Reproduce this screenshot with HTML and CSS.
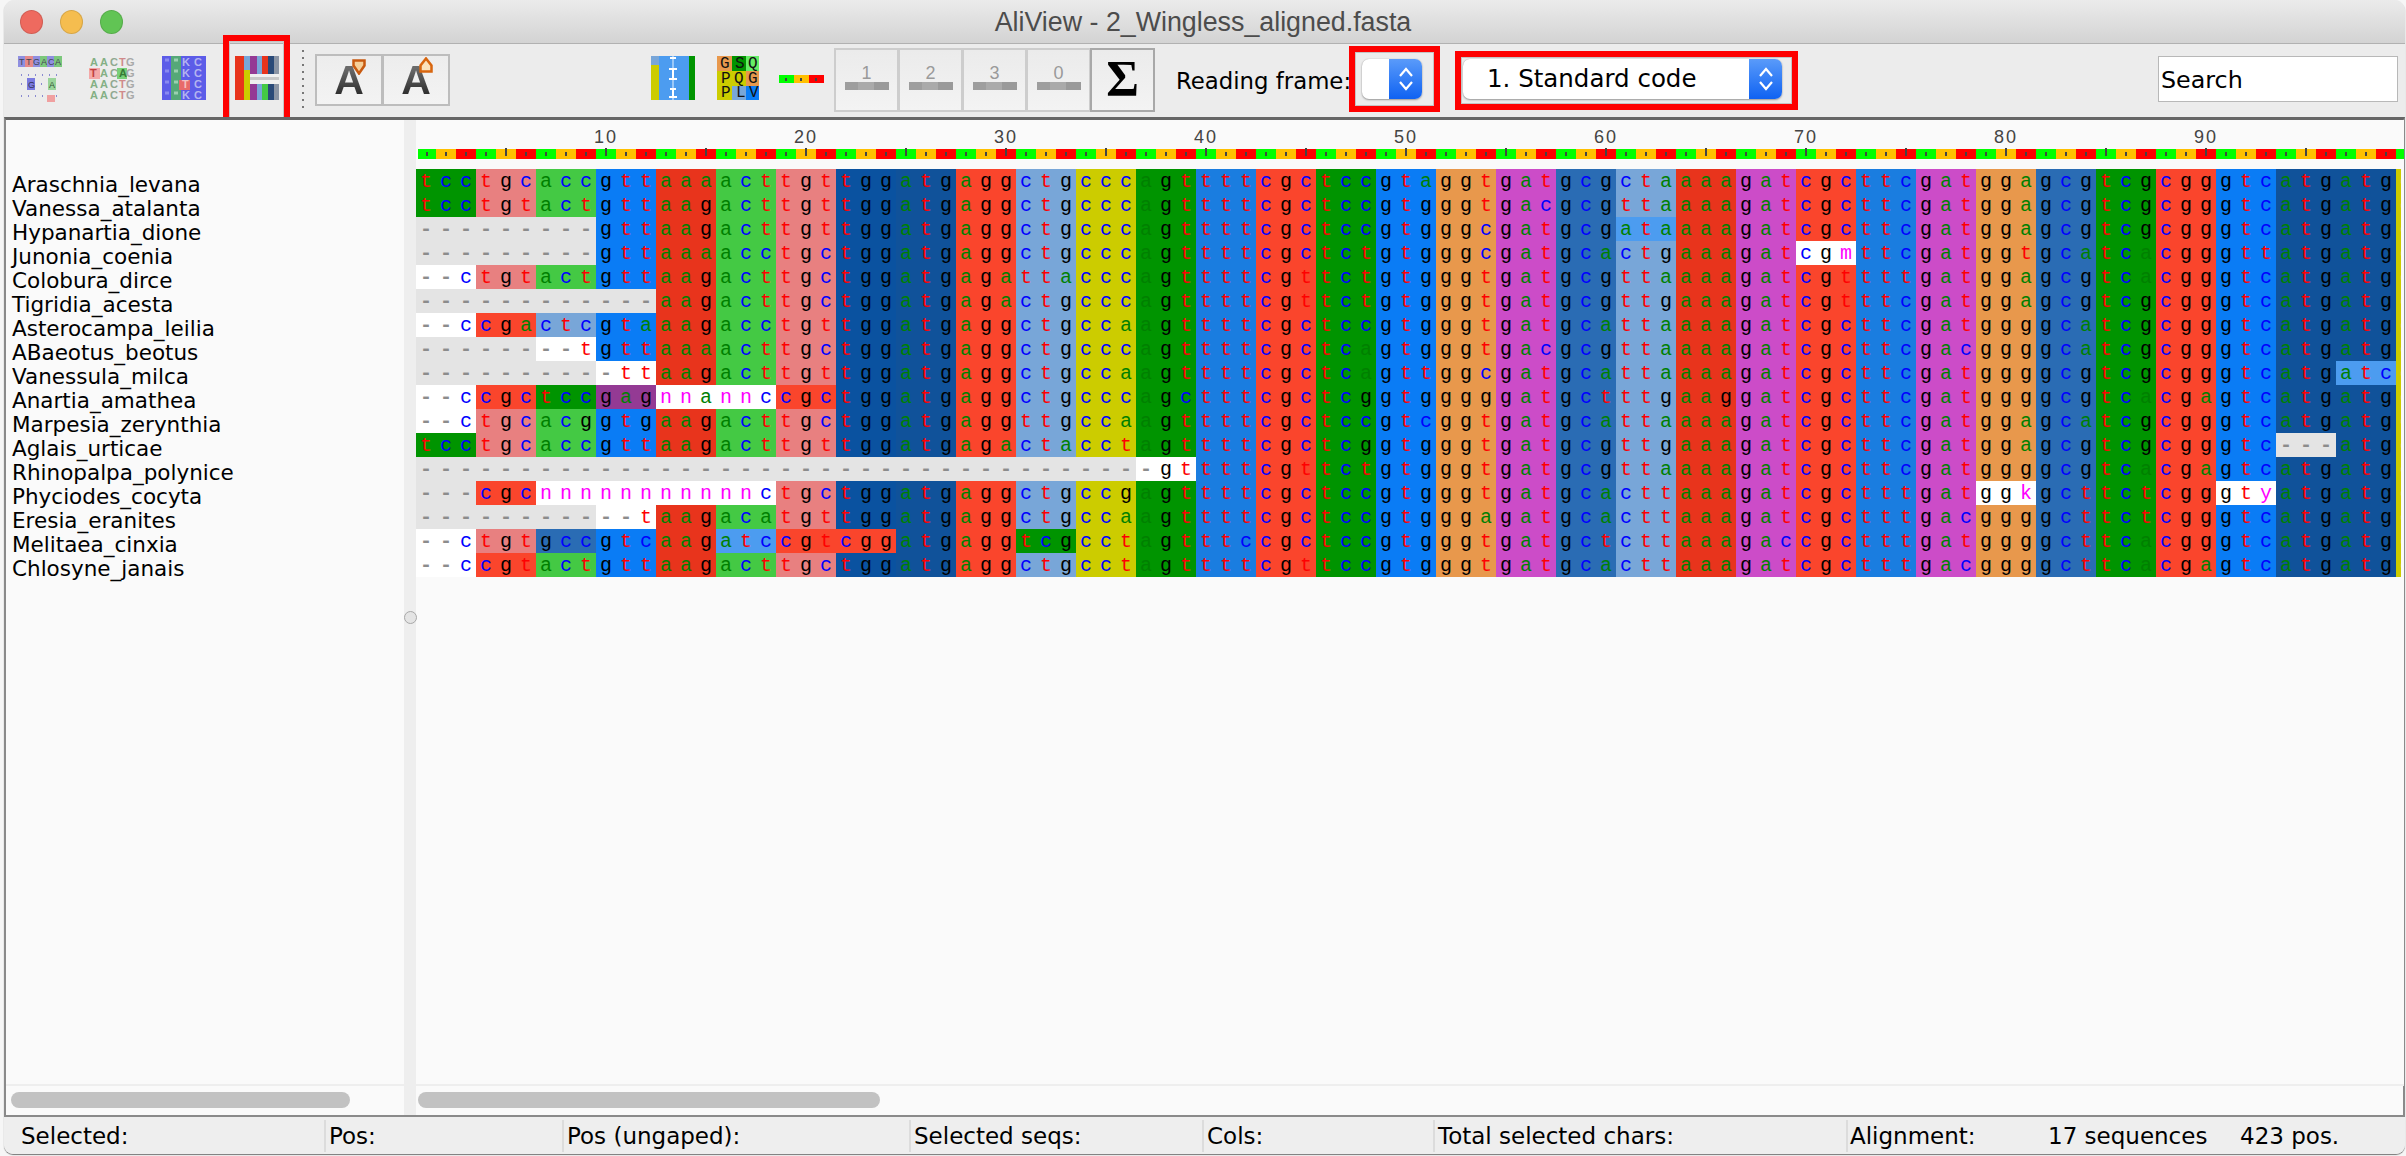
FILE: index.html
```html
<!DOCTYPE html>
<html lang="en">
<head>
<meta charset="utf-8">
<title>AliView - 2_Wingless_aligned.fasta</title>
<link rel="stylesheet" href="styles.css">
</head>
<body>
<div class="window">
  <header class="titlebar">
    <div class="lights"><i class="light red"></i><i class="light yellow"></i><i class="light green"></i></div>
    <div class="title">AliView - 2_Wingless_aligned.fasta</div>
  </header>
  <div class="toolbar">
    <svg class="icon i1" width="44" height="46" viewBox="0 0 44 46">
      <rect width="44" height="11" fill="#8f8fe0"/><rect x="7" width="8" height="11" fill="#e58a8a"/><rect x="22" width="7" height="11" fill="#7cc87c"/><rect x="36" width="8" height="11" fill="#7cc87c"/>
      <text class="itext-s" y="9" fill="#445"><tspan x="1">T</tspan><tspan x="8">T</tspan><tspan x="15">G</tspan><tspan x="23">A</tspan><tspan x="30">C</tspan><tspan x="37">A</tspan></text>
      <path d="M3 19h1M10 19h1M17 19h1M24 19h1M31 19h1M38 19h1M3 40h1M10 40h1M17 40h1M24 40h1M31 40h1M38 40h1" stroke="#8a8ad0" stroke-width="2"/>
      <rect x="9" y="22" width="8" height="12" fill="#7a7ae0"/><rect x="30" y="22" width="8" height="12" fill="#9ad49a"/>
      <text class="itext-s" x="10" y="32" fill="#335">G</text><text class="itext-s" x="31" y="32" fill="#353">A</text>
      <path d="M3 28h1M23 28h1" stroke="#8a8ad0" stroke-width="2"/>
      <rect x="29" y="39" width="8" height="7" fill="#f0a0a0"/>
    </svg>
    <svg class="icon i2" width="46" height="44" viewBox="0 0 46 44">
      <rect x="0" y="12" width="11" height="11" fill="#f4a8a8"/><rect x="28" y="12" width="10" height="11" fill="#78d078"/>
      <g class="itext-m">
        <text y="10"><tspan x="1" fill="#84b084">A</tspan><tspan x="11" fill="#84b084">A</tspan><tspan x="21" fill="#90a890">C</tspan><tspan x="30" fill="#d08a8a">T</tspan><tspan x="37" fill="#a8a8a8">G</tspan></text>
        <text y="21"><tspan x="1" fill="#c04040">T</tspan><tspan x="11" fill="#84b084">A</tspan><tspan x="21" fill="#90a890">C</tspan><tspan x="30" fill="#357a35">A</tspan><tspan x="37" fill="#a8a8a8">G</tspan></text>
        <text y="32"><tspan x="1" fill="#84b084">A</tspan><tspan x="11" fill="#84b084">A</tspan><tspan x="21" fill="#90a890">C</tspan><tspan x="30" fill="#d08a8a">T</tspan><tspan x="37" fill="#a8a8a8">G</tspan></text>
        <text y="43"><tspan x="1" fill="#84b084">A</tspan><tspan x="11" fill="#84b084">A</tspan><tspan x="21" fill="#90a890">C</tspan><tspan x="30" fill="#d08a8a">T</tspan><tspan x="37" fill="#a8a8a8">G</tspan></text>
      </g>
    </svg>
    <svg class="icon i3" width="44" height="44" viewBox="0 0 44 44">
      <rect width="44" height="44" fill="#5c5ce8"/><rect x="9" width="10" height="44" fill="#55a878"/><rect x="17" y="24" width="11" height="10" fill="#e86a6a"/>
      <g class="itext-m" fill="#b4b4f0">
        <text y="10"><tspan x="20">K</tspan><tspan x="32">C</tspan></text>
        <text y="21"><tspan x="20">K</tspan><tspan x="32">C</tspan></text>
        <text y="32"><tspan x="20" fill="#f4c0c0">T</tspan><tspan x="32">C</tspan></text>
        <text y="43"><tspan x="20">K</tspan><tspan x="32">C</tspan></text>
      </g>
      <path d="M3 4h4M3 15h4M3 26h4M3 37h4" stroke="#8a8af0" stroke-width="3"/>
      <path d="M12 4h4M12 15h4M12 26h4M12 37h4" stroke="#9ad0b0" stroke-width="3"/>
    </svg>
    <svg class="icon i4" width="44" height="44" viewBox="0 0 44 44">
      <rect width="9" height="44" fill="#e8341c"/><rect x="9" width="6" height="44" fill="#cccc00"/><rect x="9" width="6" height="14" fill="#78a6d8"/>
      <rect x="15" width="7" height="44" fill="#943a94"/><rect x="22" width="5" height="44" fill="#78a6d8"/><rect x="27" width="6" height="44" fill="#e8341c"/><rect x="27" y="28" width="6" height="16" fill="#44c944"/>
      <rect x="33" width="6" height="44" fill="#2a4a78"/><rect x="39" width="5" height="44" fill="#8a94a4"/>
      <rect x="15" y="18" width="29" height="10" fill="#f0f0f0"/><rect x="15" y="21" width="29" height="3" fill="#c8c8c8"/>
    </svg>
    <div class="sep"></div>
    <div class="abtn-group">
      <div class="abtn"><span class="aglyph">A</span><svg class="badge" width="14" height="16" viewBox="0 0 14 16"><path d="M1.500 1.500h11v5l-5.500 8-5.500-8z" fill="#f5d09a" stroke="#c85a10" stroke-width="2.500"/></svg></div>
      <div class="abtn"><span class="aglyph">A</span><svg class="badge up" width="14" height="16" viewBox="0 0 14 16"><path d="M1.500 14.500h11v-6l-5.500-7-5.500 7z" fill="#fbe2bc" stroke="#d8660f" stroke-width="2.500"/></svg></div>
    </div>
    <svg class="icon i5" width="44" height="44" viewBox="0 0 44 44">
      <rect width="8" height="44" fill="#cccc00"/><rect width="8" height="9" fill="#78a6d8"/><rect x="8" width="30" height="44" fill="#4c9cf0"/><rect x="38" width="6" height="44" fill="#009400"/>
      <path d="M22 0v44" stroke="#9ac8f8" stroke-width="2"/>
      <path d="M19 2h6M18 13h8M18 23h8M19 33h6M18 41h8" stroke="#fff" stroke-width="2"/>
      <path d="M22 13v10M22 33v8" stroke="#fff" stroke-width="2"/>
    </svg>
    <svg class="icon i6" width="42" height="44" viewBox="0 0 42 44">
      <rect width="15" height="15" fill="#e8984c"/><rect x="15" width="14" height="15" fill="#009400"/><rect x="29" width="13" height="15" fill="#66ee66"/>
      <rect y="15" width="29" height="15" fill="#cccc00"/><rect x="29" y="15" width="13" height="15" fill="#e8984c"/>
      <rect y="30" width="15" height="14" fill="#cccc00"/><rect x="15" y="30" width="14" height="14" fill="#78a6d8"/><rect x="29" y="30" width="13" height="14" fill="#0a7cf5"/>
      <g class="i6text">
        <text x="3" y="12">G</text><text x="18" y="12">S</text><text x="31" y="12">Q</text>
        <text x="4" y="27">P</text><text x="17" y="27">Q</text><text x="31" y="27">G</text>
        <text x="4" y="41">P</text><text x="19" y="41">L</text><text x="32" y="41">V</text>
      </g>
    </svg>
    <svg class="icon i7" width="45" height="8" viewBox="0 0 45 8">
      <rect width="15" height="8" fill="#0f0"/><rect x="15" width="15" height="8" fill="#ffc000"/><rect x="30" width="15" height="8" fill="#f00"/>
      <path d="M7 3v3M22 3v3M37 3v3" stroke="#444" stroke-width="2"/>
    </svg>
    <div class="frames">
      <div class="fbtn"><span class="fnum">1</span><span class="fbar"></span></div>
      <div class="fbtn"><span class="fnum">2</span><span class="fbar"></span></div>
      <div class="fbtn"><span class="fnum">3</span><span class="fbar"></span></div>
      <div class="fbtn"><span class="fnum">0</span><span class="fbar"></span></div>
      <div class="fbtn sigma">Σ</div>
    </div>
    <div class="rf-label">Reading frame:</div>
    <div class="select frame-select">
      <span class="select-text"></span>
      <span class="stepper"><svg width="20" height="30" viewBox="0 0 20 30"><path d="M4 12l6-7 6 7M4 18l6 7 6-7" fill="none" stroke="#fff" stroke-width="2.200"/></svg></span>
    </div>
    <div class="select code-select">
      <span class="select-text">1. Standard code</span>
      <span class="stepper"><svg width="20" height="30" viewBox="0 0 20 30"><path d="M4 12l6-7 6 7M4 18l6 7 6-7" fill="none" stroke="#fff" stroke-width="2.200"/></svg></span>
    </div>
    <div class="search">Search</div>
    <div class="hl hl-a"></div>
    <div class="hl hl-b"></div>
    <div class="hl hl-c"></div>
  </div>
  <main class="main">
    <section class="names-pane">
      <div class="names">
        <div>Araschnia_levana</div><div>Vanessa_atalanta</div><div>Hypanartia_dione</div><div>Junonia_coenia</div>
        <div>Colobura_dirce</div><div>Tigridia_acesta</div><div>Asterocampa_leilia</div><div>ABaeotus_beotus</div>
        <div>Vanessula_milca</div><div>Anartia_amathea</div><div>Marpesia_zerynthia</div><div>Aglais_urticae</div>
        <div>Rhinopalpa_polynice</div><div>Phyciodes_cocyta</div><div>Eresia_eranites</div><div>Melitaea_cinxia</div><div>Chlosyne_janais</div>
      </div>
    </section>
    <div class="divider"><i class="knob"></i></div>
    <section class="align-pane">
      <div class="ruler-nums">
        <span>10</span><span>20</span><span>30</span><span>40</span><span>50</span><span>60</span><span>70</span><span>80</span><span>90</span>
      </div>
      <div class="ruler-bar" id="bar"></div>
      <div class="seqs" id="seqs"></div>
    </section>
    <div class="scroll-l"><i class="thumb thumb-l"></i></div>
    <div class="divider-b"></div>
    <div class="scroll-r"><i class="thumb thumb-r"></i></div>
  </main>
  <footer class="status">
    <div class="cell c1">Selected:</div>
    <div class="cell c2">Pos:</div>
    <div class="cell c3">Pos (ungaped):</div>
    <div class="cell c4">Selected seqs:</div>
    <div class="cell c5">Cols:</div>
    <div class="cell c6">Total selected chars:</div>
    <div class="cell c7"><span class="s1">Alignment:</span><span class="s2">17 sequences</span><span>423 pos.</span></div>
  </footer>
</div>
<script src="script.js"></script>
</body>
</html>
```
FILE: styles.css
```css
* { box-sizing: border-box; }
html, body { margin: 0; height: 100%; overflow: hidden; }
body { background: #f6f6f6; font-family: "DejaVu Sans", sans-serif; color: #000; }
.window {
  margin-left: 4px; width: 2401px; height: 1154px; display: flex; flex-direction: column;
  background: #ececec; border-radius: 11px 11px 9px 9px; overflow: hidden;
  box-shadow: 0 1px 1px #777;
}
.titlebar {
  height: 44px; flex: none; display: flex; align-items: center; position: relative;
  background: linear-gradient(#ebebeb, #d3d3d3); border-bottom: 1px solid #b1b1b1;
}
.lights { display: flex; gap: 17px; margin-left: 16px; }
.light { width: 23px; height: 24px; border-radius: 50%; border: 1px solid rgba(0,0,0,.12); }
.red { background: #ee6a5f; } .yellow { background: #f5bd4f; } .green { background: #61c454; }
.title {
  position: absolute; left: 0; right: 0; top: 6px; text-align: center; padding-right: 3px;
  font: 26.800px/32px "Liberation Sans", sans-serif; color: #4c4c4c;
}
.toolbar { height: 73px; flex: none; display: flex; align-items: center; position: relative; padding-left: 14px; background: #ececec; }
.icon { flex: none; overflow: visible; }
.itext-s { font: 9px "Liberation Sans", sans-serif; }
.itext-m { font: bold 11px "Liberation Sans", sans-serif; }
.i1 { margin: -3px 0 0 0; }
.i2 { margin: -6px 0 0 27px; }
.i3 { margin: -6px 0 0 27px; }
.i4 { margin: -6px 0 0 29px; }
.sep { width: 2px; height: 62px; margin-left: 23px; background: repeating-linear-gradient(#777 0 2px, transparent 2px 7px); }
.abtn-group { display: flex; margin-left: 11px; margin-top: -2px; }
.abtn {
  width: 68px; height: 52px; border: 2px solid #bdbdbd; margin-right: -1px; position: relative; text-align: center;
  font: bold 41px/48px "Liberation Sans", sans-serif; background: linear-gradient(#ededed, #f3f3f3);
}
.aglyph { color: transparent; background: linear-gradient(#6a6a6a 25%, #2a2a2a 85%); -webkit-background-clip: text; background-clip: text; }
.badge { position: absolute; left: 35px; top: 3px; }
.badge.up { left: 35px; top: 1px; }
.i5 { margin: -6px 0 0 202px; }
.i6 { margin: -6px 0 0 22px; }
.i6text { font: 16px "Liberation Mono", monospace; fill: #111; }
.i7 { margin: -4px 0 0 20px; }
.frames { display: flex; margin-left: 10px; margin-top: -1px; }
.fbtn {
  width: 65px; height: 64px; border: 2px solid #cdcdcd; margin-right: -1px; display: flex; flex-direction: column; align-items: center;
  background: linear-gradient(#ebebeb, #f3f3f3);
}
.fnum { font: 18px/20px "Liberation Sans", sans-serif; color: #9a9a9a; margin-top: 13px; }
.fbar { width: 44px; height: 8px; margin-top: -1px; background: linear-gradient(90deg, #9e9e9e 0 30%, #aaaaaa 30% 65%, #9a9a9a 65%); }
.sigma { border-color: #a8a8a8; font: bold 50px/56px "Liberation Serif", serif; color: #000; width: 65px; margin-right: 0; }
.rf-label { margin-left: 21px; margin-top: 1px; font-size: 22.800px; white-space: nowrap; width: 186px; }
.select {
  height: 40px; background: #fff; border-radius: 7px; display: flex; justify-content: space-between; flex: none; margin-top: -4px;
  box-shadow: 0 1px 2px #999, 0 0 1px #aaa; overflow: hidden;
}
.frame-select { width: 60px; }
.code-select { width: 319px; margin-left: 41px; }
.select-text { font-size: 24.500px; line-height: 40px; padding-left: 24px; white-space: nowrap; }
.stepper { width: 33px; background: linear-gradient(#5a9bfa, #0f62f2); display: flex; align-items: center; justify-content: center; }
.search {
  width: 240px; height: 46px; margin-left: 376px; margin-top: -3px; background: #fff; border: 1px solid #b8b8b8; flex: none;
  font-size: 23.800px; line-height: 46px; padding-left: 2px;
}
.hl { position: absolute; border: 6px solid #fe0000; box-shadow: inset 0 0 0 1px #c4c4c4; }
.hl-a { left: 219px; top: -9px; width: 67px; height: 91px; border-bottom-width: 8px; }
.hl-b { left: 1345px; top: 2px; width: 91px; height: 66px; }
.hl-c { left: 1451px; top: 7px; width: 343px; height: 59px; }

.main {
  flex: 1; display: grid; grid-template-columns: 398px 12px 1988px; grid-template-rows: 964px 31px;
  border: 2px solid #8a8a8a; border-top: 3px solid #666; border-bottom-width: 2px; background: #fafafa; position: relative;
}
.names-pane { background: #fafafa; padding-top: 53px; }
.names { padding-left: 6px; font-size: 21.500px; line-height: 24px; white-space: nowrap; }
.divider { background: #eee; position: relative; }
.knob { position: absolute; left: 0; top: 491px; width: 13px; height: 13px; border-radius: 50%; background: #e4e4e4; border: 1px solid #a8a8a8; }
.align-pane { background: #fafafa; overflow: hidden; }
.ruler-nums { height: 29px; padding: 5px 0 0 90px; display: flex; }
.ruler-nums span { width: 200px; flex: none; text-align: center; font: 18px/24px "Liberation Sans", sans-serif; letter-spacing: 2px; color: #444; }
.ruler-bar { height: 10px; margin-left: 2px; display: flex; width: 1984px; }
.tick { width: 20px; flex: none; position: relative; }
.tick:first-child { width: 18px; }
.tick::after { content: ""; position: absolute; left: 50%; margin-left: -1px; top: 3px; width: 2px; height: 4px; background: #444; }
.tick.tall::after { top: -1px; height: 8px; }
.bar0 { background: #0f0; } .bar1 { background: #ffc000; } .bar2 { background: #f00; }
.seqs { margin-top: 10px; width: 1985px; overflow: hidden; font: 20px/26px "Liberation Mono", monospace; }
.seq { display: flex; height: 24px; background: #fff; }
.codon { flex: none; width: 60px; display: flex; }
.codon.partial { width: 5px; overflow: hidden; }
.codon span { width: 20px; text-align: center; flex: none; }
.b-t { color: #f00; } .b-c { color: #00f; } .b-a { color: #008000; } .b-g { color: #000; } .b-x { color: #f0f; } .b-gap { color: #8c8c8c; font-weight: bold; }
.aa-none { background: #fff; } .aa-gap { background: #e4e4e4; }
.aa-A { background: #2a6cb4; } .aa-C { background: #e88080; } .aa-D { background: #cc4cc8; } .aa-E { background: #943a94; }
.aa-F { background: #1a7de0; } .aa-G { background: #e8984c; } .aa-I { background: #4c9cf0; } .aa-K { background: #e8341c; }
.aa-L { background: #78a6d8; } .aa-M { background: #10529a; } .aa-P { background: #cccc00; } .aa-R { background: #fa452c; }
.aa-S { background: #009400; } .aa-T { background: #44c944; } .aa-V { background: #0a7cf5; } .aa-W { background: #0a52a0; }
.aa-H, .aa-Y { background: #15a4a4; } .aa-N, .aa-Q { background: #44c944; }
.scroll-l, .scroll-r { border-top: 2px solid #eeeeee; padding-top: 6px; }
.divider-b { background: #eee; }
.thumb { display: block; height: 16px; border-radius: 8px; background: #c2c2c2; }
.thumb-l { margin-left: 5px; width: 339px; }
.thumb-r { margin-left: 2px; width: 462px; }
.status { height: 38px; flex: none; display: flex; background: #eee; padding-top: 1px; }
.cell { height: 32px; margin-top: 2px; font-size: 23px; line-height: 32px; white-space: nowrap; border-right: 2px solid #dcdcdc; padding-left: 3px; flex: none; }
.c1 { width: 322px; padding-left: 17px; } .c2 { width: 238px; } .c3 { width: 347px; } .c4 { width: 293px; } .c5 { width: 231px; } .c6 { width: 413px; }
.c7 { border-right: 0; padding-left: 2px; }
.s1 { display: inline-block; width: 198px; } .s2 { display: inline-block; width: 192px; }
```
FILE: script.js
```js
const DATA = [
"tcc tgc acc gtt aaa act tgt tgg atg agg ctg ccc agt ttt cgc tcc gta ggt gat gcg cta aaa gat cgc ttc gat gga gcg tcg cgg gtc atg atg c",
"tcc tgt act gtt aag act tgt tgg atg agg ctg ccc agt ttt cgc tcc gtg ggt gac gcg tta aaa gat cgc ttc gat gga gcg tcg cgg gtc atg atg c",
"--- --- --- gtt aag act tgt tgg atg agg ctg ccc agt ttt cgc tcc gtg ggc gat gcg ata aaa gat cgc ttc gat gga gcg tcg cgg gtc atg atg c",
"--- --- --- gtt aaa acc tgc tgg atg agg ctg ccc agt ttt cgc tct gtg ggc gat gca ctg aaa gat cgm ttc gat ggt gca tca cgg gtt atg atg c",
"--c tgt act gtt aag act tgc tgg atg aga tta ccc agt ttt cgt tct gtg ggt gat gcg tta aaa gat cgt ttt gat gga gcg tca cgg gtc atg atg c",
"--- --- --- --- aag act tgc tgg atg aga ctg ccc agt ttt cgt tct gtg ggt gat gcg ttg aaa gat cgt ttc gat gga gcg tcg cgg gtc atg atg c",
"--c cga ctc gta aag acc tgt tgg atg agg ctg cca agt ttt cgc tcc gtg ggt gat gca tta aaa gat cgc ttc gat ggg gca tcg cgg gtc atg atg c",
"--- --- --t gtt aaa act tgc tgg atg agg ctg ccc agt ttt cgc tca gtg ggt gac gcg tta aaa gat cgc ttc gac ggg gca tcg cgg gtc atg atg c",
"--- --- --- -tt aag act tgt tgg atg agg ctg cca agt ttt cgc tca gtt ggc gat gca tta aaa gat cgc ttc gat ggg gcg tcg cgg gtc atg atc c",
"--c cgc tcc gag nna nnc cgc tgg atg agg ctg ccc agc ttt cgc tcg gtg ggg gat gct ttg aag gat cgc ttc gat ggg gcg tca cga gtc atg atg c",
"--c tgc acg gtg aag act tgc tgg atg agg ttg cca agt ttt cgc tcc gtc ggt gat gca tta aaa gat cgc ttc gat gga gca tcg cgg gtc atg atg c",
"tcc tgc acc gtt aag act tgt tgg atg aga cta cct agt ttt cgc tcg gtg ggt gat gcg ttg aaa gat cgc ttc gat gga gcg tcg cgg gtc --- atg c",
"--- --- --- --- --- --- --- --- --- --- --- --- -gt ttt cgt tct gtg ggt gat gcg tta aaa gat cgc ttc gat ggg gcg tca cga gtc atg atg c",
"--- cgc nnn nnn nnn nnc tgc tgg atg agg ctg ccg agt ttt cgc tcc gtg ggt gat gca ctt aaa gat cgc ttt gat ggk gct tct cgg gty atg atg c",
"--- --- --- --t aag aca tgt tgg atg agg ctg cca agt ttt cgc tcc gtg gga gat gca ctt aaa gat cgc ttt gac ggg gct tct cgg gtc atg atg c",
"--c tgt gcc gtc aag atc cgt cgg atg agg tcg cct agt ttc cgc tcc gtg ggt gat gct ctt aaa gac cgc ttt gat ggg gct tca cgg gtc atg atg c",
"--c cgt act gtt aag act tgc tgg atg agg ctg cct agt ttt cgt tcc gtg ggt gat gca ctt aaa gat cgc ttt gac ggg gct tca cga gtc atg atg c"
];
const CODE = "FFLLSSSSYY**CC*WLLLLPPPPHHQQRRRRIIIMTTTTNNKKSSRRVVVVAAAADDEEGGGG";
const ORDER = "tcag";

function aminoClass(codon) {
  if (codon.length < 3) return "aa-P partial";
  if (codon === "---") return "aa-gap";
  if (!/^[tcag]{3}$/.test(codon)) return "aa-none";
  const i = ORDER.indexOf(codon[0]) * 16 + ORDER.indexOf(codon[1]) * 4 + ORDER.indexOf(codon[2]);
  return CODE[i] === "*" ? "aa-none" : "aa-" + CODE[i];
}
function baseClass(ch) {
  if (ch === "-") return "b-gap";
  return "tcag".includes(ch) ? "b-" + ch : "b-x";
}

const seqs = document.getElementById("seqs");
for (const line of DATA) {
  const row = document.createElement("div");
  row.className = "seq";
  for (const codon of line.split(" ")) {
    const box = document.createElement("div");
    box.className = "codon " + aminoClass(codon);
    for (const ch of codon) {
      const s = document.createElement("span");
      s.className = baseClass(ch);
      s.textContent = ch;
      box.appendChild(s);
    }
    row.appendChild(box);
  }
  seqs.appendChild(row);
}

const bar = document.getElementById("bar");
for (let i = 0; i < 100; i++) {
  const t = document.createElement("div");
  t.className = "tick bar" + (i % 3) + ((i + 1) % 5 === 0 ? " tall" : "");
  bar.appendChild(t);
}
```
